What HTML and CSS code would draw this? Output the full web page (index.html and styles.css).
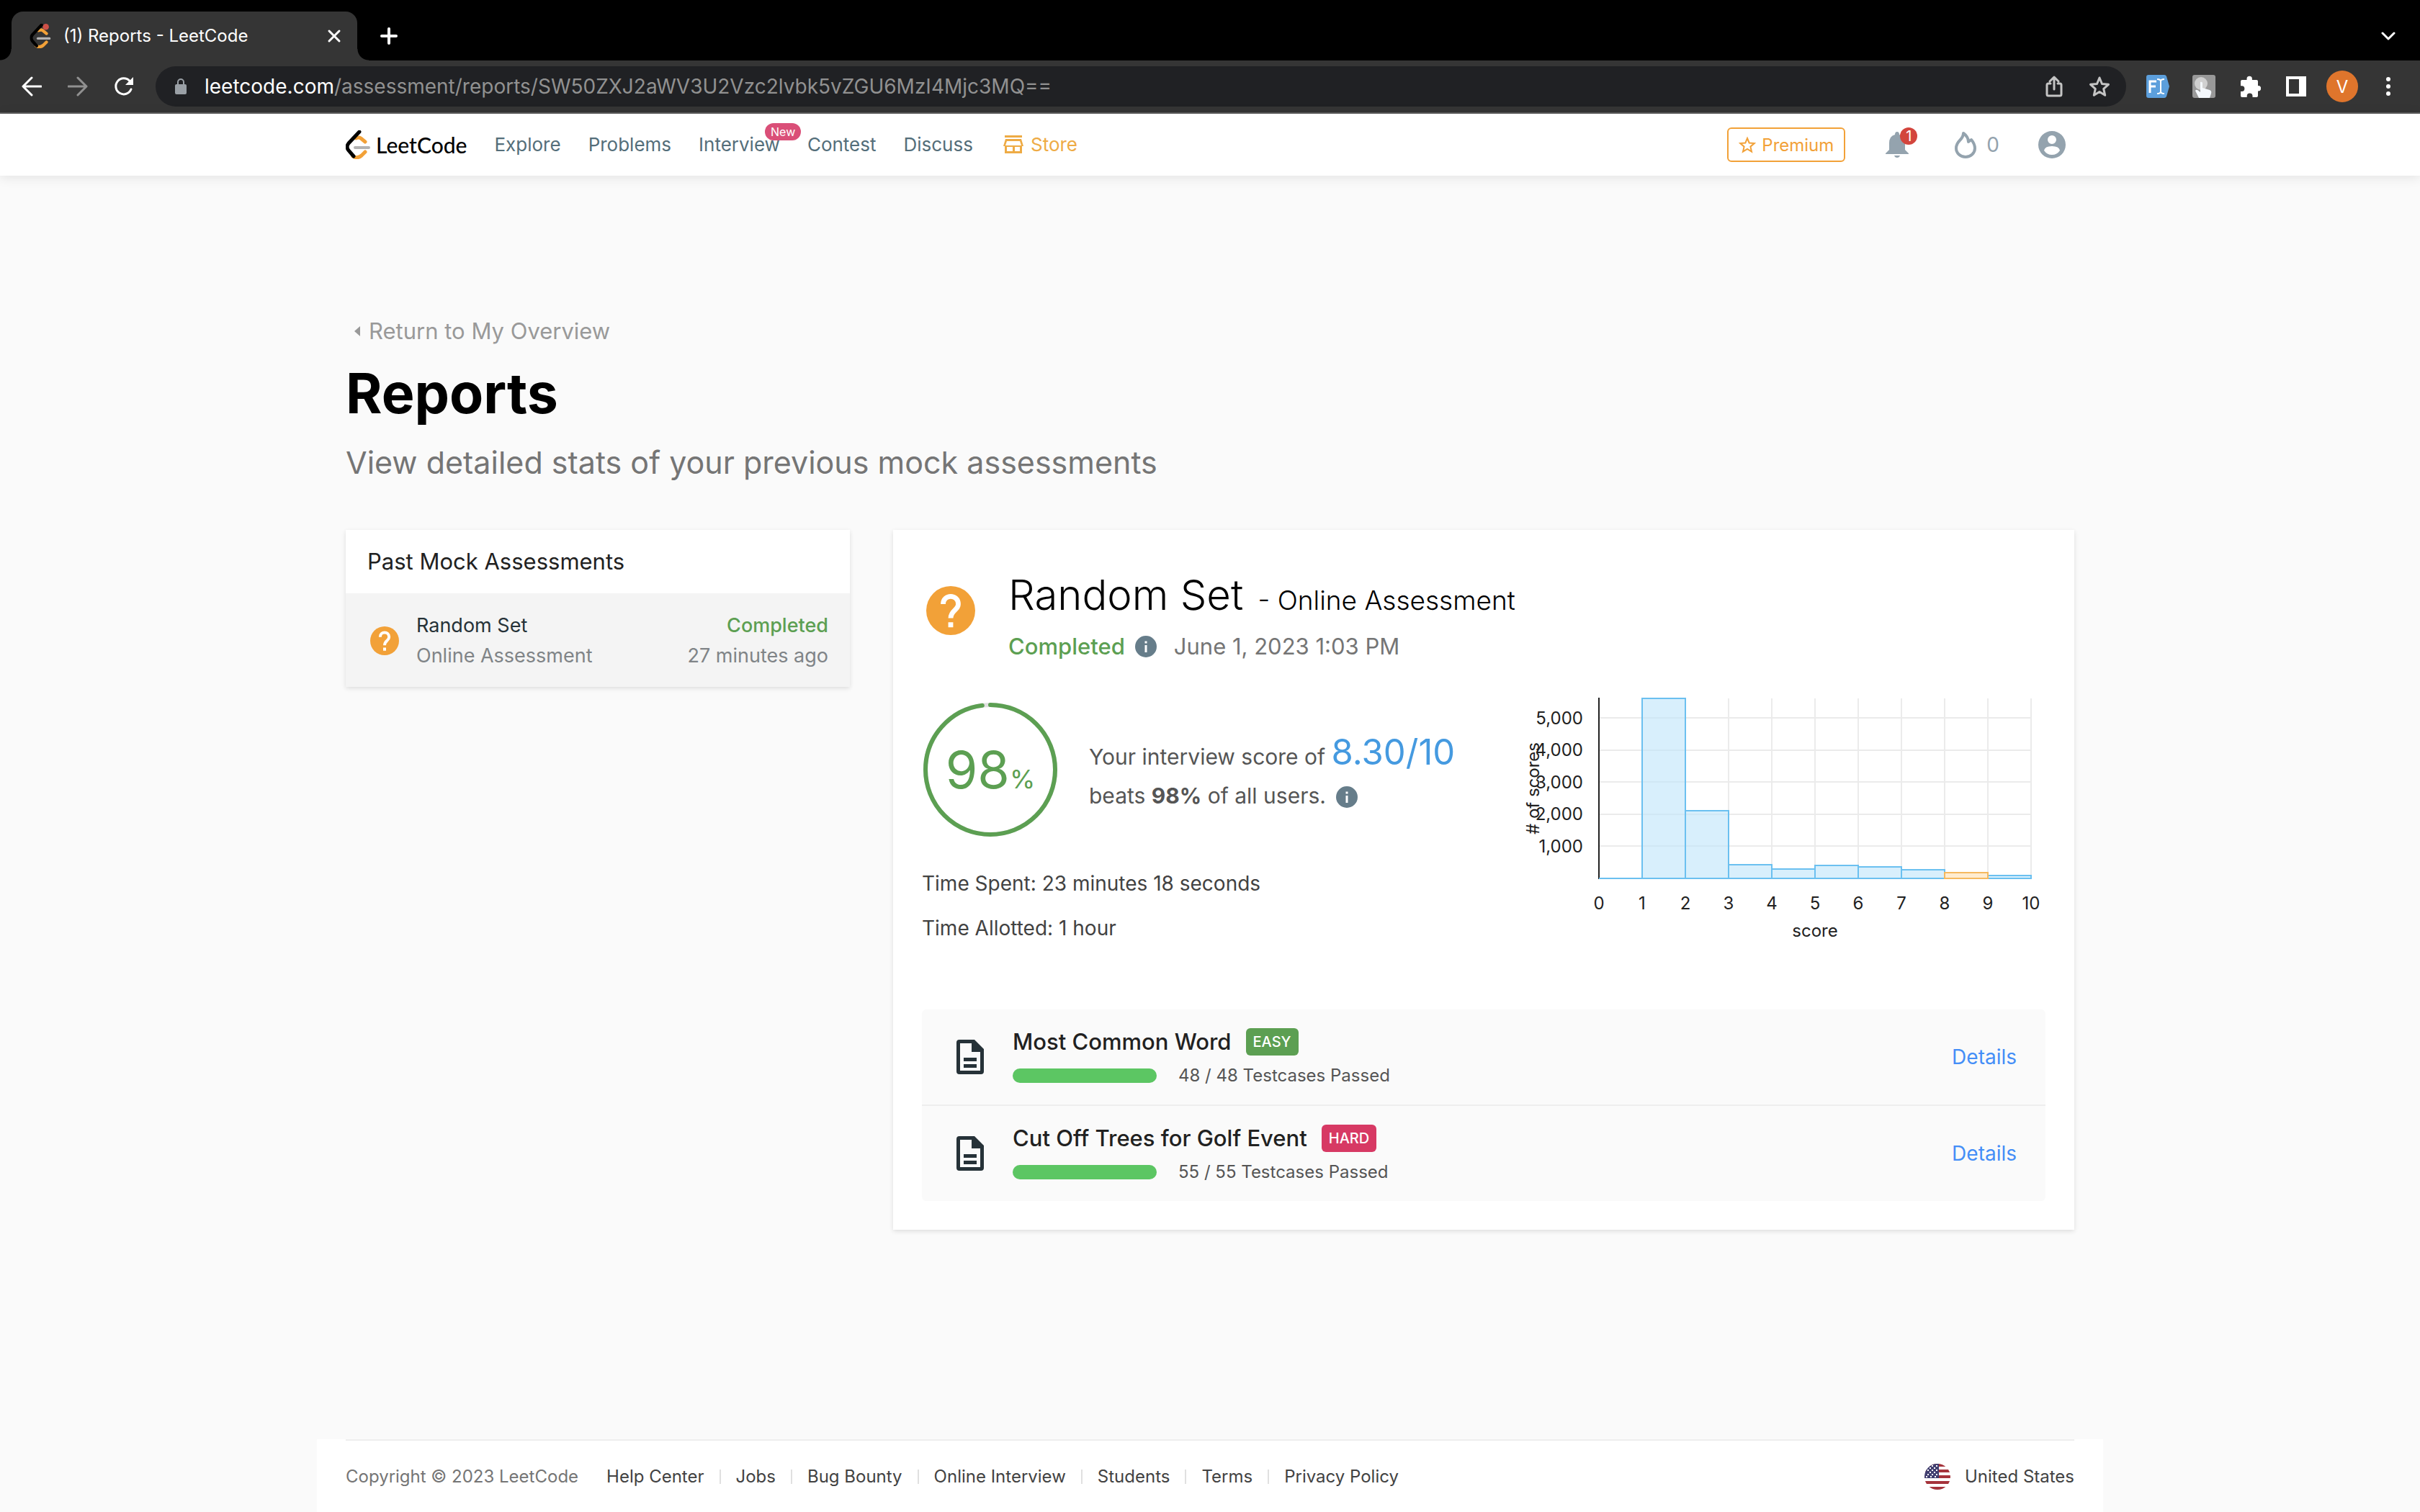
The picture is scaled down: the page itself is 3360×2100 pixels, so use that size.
FILE: index.html
```html
<!DOCTYPE html>
<html lang="en">
<head>
<meta charset="utf-8">
<title>(1) Reports - LeetCode</title>
<link rel="stylesheet" href="styles.css">
</head>
<body>
<svg class="defs" width="0" height="0" aria-hidden="true">
  <symbol id="mark" viewBox="0 0 34 40">
    <path class="mark-amber" d="M14 11q4-2 7 0l6 5M10 36q6 4 12-1l5-5"/>
    <path class="mark-black" d="M19 2 4 18q-4 5 0 10l7 8"/>
    <path class="mark-grey" d="M13 24h19"/>
  </symbol>
  <symbol id="question" viewBox="0 0 24 24">
    <path fill="#f2a138" d="M12 0a12 12 0 1 0 0 24 12 12 0 0 0 0-24z"/>
    <path fill="none" stroke="#fff" stroke-width="2.400" d="M8.300 8.800c0-5 7.400-5 7.400 0 0 3.100-3.700 3-3.700 6.900"/>
    <path fill="#fff" d="M10.800 17.700h2.400v2.500h-2.400z"/>
  </symbol>
  <symbol id="info" viewBox="0 0 30 30">
    <circle cx="15" cy="15" r="15" fill="#667d8a"/>
    <path fill="#fff" d="M13.500 7.500h3v3h-3zM13.500 13h3v10h-3z"/>
  </symbol>
  <symbol id="doc" viewBox="0 0 38 48">
    <path fill="#263238" fill-rule="evenodd" d="M4 0h21l13 13v31q0 4-4 4H4q-4 0-4-4V4q0-4 4-4zM5 5v38h28V17H21V5zM10 25h18v5H10zM10 34h18v5H10z"/>
  </symbol>
</svg>

<header class="browser">
  <div class="tabs">
    <div class="tab">
      <svg class="favicon" viewBox="0 0 34 40"><use href="#mark"/><circle cx="26" cy="5" r="5" fill="#cf5148"/></svg>
      <span class="tab-title">(1) Reports - LeetCode</span>
      <button class="plain" aria-label="Close tab"><svg width="20" height="20" viewBox="0 0 20 20"><path class="stroke" d="M3 3l14 14M17 3L3 17"/></svg></button>
    </div>
    <button class="plain new-tab" aria-label="New tab"><svg width="24" height="24" viewBox="0 0 24 24"><path class="stroke bold" d="M12 2v20M2 12h20"/></svg></button>
    <button class="plain tab-search" aria-label="Search tabs"><svg width="20" height="12" viewBox="0 0 20 12"><path class="stroke" d="M2 2l8 8 8-8"/></svg></button>
  </div>
  <div class="toolbar">
    <div class="history">
      <button class="plain" aria-label="Back"><svg width="28" height="28" viewBox="0 0 28 28"><path class="stroke" d="M27 14H3M14 2L2 14l12 12"/></svg></button>
      <button class="plain dim" aria-label="Forward"><svg width="28" height="28" viewBox="0 0 28 28"><path class="stroke" d="M1 14h24M14 2l12 12-12 12"/></svg></button>
      <button class="plain" aria-label="Reload"><svg width="28" height="28" viewBox="0 0 28 28"><path class="stroke" d="M24 18A11 11 0 1 1 22 6.500"/><path fill="#fff" d="M27 1v11H16z"/></svg></button>
    </div>
    <div class="address">
      <svg width="18" height="24" viewBox="0 0 18 24"><rect x="1" y="9" width="16" height="14" rx="2" fill="#9aa0a6"/><path fill="none" stroke="#9aa0a6" stroke-width="2" d="M5 10V6a4 4 0 0 1 8 0v4"/></svg>
      <span class="url"><span class="host">leetcode.com</span>/assessment/reports/SW50ZXJ2aWV3U2Vzc2lvbk5vZGU6MzI4Mjc3MQ==</span>
      <button class="plain share" aria-label="Share"><svg width="24" height="30" viewBox="0 0 24 30"><path class="stroke soft" d="M7 11H4q-2 0-2 2v13q0 2 2 2h16q2 0 2-2V13q0-2-2-2h-3M12 19V2M6 8l6-6 6 6"/></svg></button>
      <button class="plain" aria-label="Bookmark"><svg width="30" height="30" viewBox="0 0 30 30"><path class="stroke soft" d="M15 3l3.500 8.500 9 .8-6.800 6 2 9L15 22.500 7.300 27.300l2-9-6.800-6 9-.8z"/></svg></button>
    </div>
    <div class="extensions">
      <svg width="32" height="32" viewBox="0 0 32 32"><path fill="#5c9fdc" d="M3 0h22q2 0 3 2l4 14-4 14q-1 2-3 2H3q-3 0-3-3V3q0-3 3-3z"/><path fill="none" stroke="#fff" stroke-width="3" d="M5 25V9h9M5 16h8"/><path fill="none" stroke="#fff" stroke-width="2" d="M15 6q5 0 5 3v14q0 3-5 3M25 6q-5 0-5 3v14q0 3 5 3"/></svg>
      <svg width="32" height="32" viewBox="0 0 32 32"><rect width="32" height="32" rx="3" fill="#999"/><circle cx="12" cy="12" r="9" fill="#d0d0d0"/><path fill="#f4f8fc" d="M11 10q2-1 3 1v7l10 3q3 1 2 5l-2 6H9l-5-10q1-2 3-1l4 3z"/></svg>
      <svg width="30" height="30" viewBox="0 0 30 30"><path fill="#fff" d="M4 6h6.500V4.500a3.700 3.700 0 0 1 7.400 0V6H24q2 0 2 2v6h.500a3.700 3.700 0 0 1 0 7.400H26V28q0 2-2 2h-5.500v-1.500a3.900 3.900 0 0 0-7.800 0V30H4q-2 0-2-2v-6h1.500a3.900 3.900 0 0 0 0-7.800H2V8q0-2 2-2z"/></svg>
      <svg width="28" height="28" viewBox="0 0 28 28"><path fill="#fff" fill-rule="evenodd" d="M0 0h28v28H0zM4 4v20h14V4z"/></svg>
      <button class="avatar" aria-label="Profile">V</button>
      <button class="plain" aria-label="Menu"><svg width="8" height="28" viewBox="0 0 8 28"><g fill="#fff"><circle cx="4" cy="4" r="3"/><circle cx="4" cy="14" r="3"/><circle cx="4" cy="24" r="3"/></g></svg></button>
    </div>
  </div>
</header>

<div class="navbar">
  <div class="container nav-inner">
    <a class="logo" href="#"><svg width="34" height="40" viewBox="0 0 34 40"><use href="#mark"/></svg><span>LeetCode</span></a>
    <nav class="links">
      <a href="#">Explore</a>
      <a href="#">Problems</a>
      <a class="has-new" href="#">Interview<span class="new">New</span></a>
      <a href="#">Contest</a>
      <a href="#">Discuss</a>
      <a class="store" href="#"><svg width="28" height="26" viewBox="0 0 28 26"><path fill="#eeab45" fill-rule="evenodd" d="M2 0h24v3H2zM3 5h22l3 10h-2v10H2V15H0zM5 8l-2 6h22l-2-6zM5 16v6h8v-6zM16 16v6h7v-6z"/></svg>Store</a>
    </nav>
    <div class="account">
      <button class="premium"><svg width="24" height="24" viewBox="0 0 24 24"><path fill="none" stroke="#f2a138" stroke-width="2" d="M12 3l2.700 6.500 7 .600-5.300 4.600 1.600 6.900-6-3.700-6 3.700 1.600-6.900L2.300 10.100l7-.6z"/></svg>Premium</button>
      <button class="plain bell" aria-label="Notifications"><svg width="32" height="36" viewBox="0 0 32 36"><path fill="#94a3ae" d="M16 0q3 0 3 4 8 2 8 12v9l5 5v1H0v-1l5-5v-9Q5 6 13 4q0-4 3-4zM12 33h8q-1 3-4 3t-4-3z"/></svg><span class="count">1</span></button>
      <span class="streak"><svg width="30" height="38" viewBox="0 0 30 38"><path fill="none" stroke="#94a3ae" stroke-width="4" stroke-linejoin="round" d="M12 3q7 5 7 12l4-3q5 6 5 12a13 12 0 0 1-26 0Q2 18 7 13q5-5 5-10z"/></svg>0</span>
      <button class="plain" aria-label="Account"><svg width="38" height="38" viewBox="0 0 38 38"><path fill="#94a3ae" fill-rule="evenodd" d="M19 0a19 19 0 1 1 0 38 19 19 0 0 1 0-38zM19 6a6 6 0 1 0 0 12 6 6 0 0 0 0-12zM8 27q4 6 11 6t11-6q-1-6-11-6T8 27z"/></svg></button>
    </div>
  </div>
</div>

<main class="container">
  <a class="return" href="#"><svg width="8" height="14" viewBox="0 0 8 14"><path fill="#999" d="M8 0v14L0 7z"/></svg>Return to My Overview</a>
  <h1>Reports</h1>
  <p class="lead">View detailed stats of your previous mock assessments</p>

  <div class="columns">
    <aside class="card past">
      <h2>Past Mock Assessments</h2>
      <a class="past-item" href="#">
        <svg width="40" height="40"><use href="#question"/></svg>
        <span class="past-name"><b>Random Set</b>Online Assessment</span>
        <span class="past-state"><em>Completed</em>27 minutes ago</span>
      </a>
    </aside>

    <section class="card report">
      <div class="report-head">
        <svg width="68" height="68"><use href="#question"/></svg>
        <div>
          <h2>Random Set <small>- Online Assessment</small></h2>
          <p class="status"><em>Completed</em><svg width="30" height="30"><use href="#info"/></svg><time>June 1, 2023 1:03 PM</time></p>
        </div>
      </div>

      <div class="summary">
        <div class="result">
          <div class="score">
            <div class="ring">
              <svg viewBox="0 0 186 186"><circle cx="93" cy="93" r="90" fill="none" stroke="#e0e0e0" stroke-width="6"/><circle cx="93" cy="93" r="90" fill="none" stroke="#5c9f52" stroke-width="6" stroke-linecap="round" pathLength="100" stroke-dasharray="98 2" transform="rotate(-90 93 93)"/></svg>
              <p>98<small>%</small></p>
            </div>
            <p class="score-text">Your interview score of <span class="points">8.30/10</span><br>beats <strong>98%</strong> of all users. <svg width="30" height="30"><use href="#info"/></svg></p>
          </div>
          <p class="time">Time Spent: 23 minutes 18 seconds</p>
          <p class="time">Time Allotted: 1 hour</p>
        </div>

        <svg class="chart" width="740" height="360" viewBox="-20 0 740 360" role="img" aria-label="Score distribution">
          <path class="grid" d="M160 10v250M220 10v250M280 10v250M340 10v250M400 10v250M460 10v250M520 10v250M580 10v250M640 10v250M700 10v250M100 37h600M100 82h600M100 126h600M100 171h600M100 215h600"/>
          <path class="axis" d="M100 9v252"/>
          <g class="bars">
            <path d="M100 260h60"/>
            <rect x="160" y="10" width="60" height="250"/>
            <rect x="220" y="166" width="60" height="94"/>
            <rect x="280" y="241" width="60" height="19"/>
            <rect x="340" y="247" width="60" height="13"/>
            <rect x="400" y="242" width="60" height="18"/>
            <rect x="460" y="244" width="60" height="16"/>
            <rect x="520" y="248" width="60" height="12"/>
            <rect x="640" y="256" width="60" height="4"/>
            <rect class="mine" x="580" y="252" width="60" height="8"/>
          </g>
          <g class="ticks end">
            <text x="78" y="46">5,000</text><text x="78" y="90">4,000</text><text x="78" y="135">3,000</text><text x="78" y="179">2,000</text><text x="78" y="224">1,000</text>
          </g>
          <g class="ticks mid">
            <text x="100" y="303">0</text><text x="160" y="303">1</text><text x="220" y="303">2</text><text x="280" y="303">3</text><text x="340" y="303">4</text><text x="400" y="303">5</text><text x="460" y="303">6</text><text x="520" y="303">7</text><text x="580" y="303">8</text><text x="640" y="303">9</text><text x="700" y="303">10</text>
            <text x="400" y="341">score</text>
            <text transform="translate(17 135) rotate(-90)"># of scores</text>
          </g>
        </svg>
      </div>

      <ul class="questions">
        <li>
          <svg width="38" height="48"><use href="#doc"/></svg>
          <div class="question">
            <h3>Most Common Word <span class="level easy">EASY</span></h3>
            <p><progress value="48" max="48" aria-label="Testcases passed"></progress>48 / 48 Testcases Passed</p>
          </div>
          <a href="#">Details</a>
        </li>
        <li>
          <svg width="38" height="48"><use href="#doc"/></svg>
          <div class="question">
            <h3>Cut Off Trees for Golf Event <span class="level hard">HARD</span></h3>
            <p><progress value="55" max="55" aria-label="Testcases passed"></progress>55 / 55 Testcases Passed</p>
          </div>
          <a href="#">Details</a>
        </li>
      </ul>
    </section>
  </div>
</main>

<footer>
  <div class="footer-inner">
    <span class="copyright">Copyright © 2023 LeetCode</span>
    <nav class="footer-links"><a href="#">Help Center</a><a href="#">Jobs</a><a href="#">Bug Bounty</a><a href="#">Online Interview</a><a href="#">Students</a><a href="#">Terms</a><a href="#">Privacy Policy</a></nav>
    <a class="region" href="#">
      <svg width="36" height="36" viewBox="0 0 36 36"><clipPath id="disc"><circle cx="18" cy="18" r="18"/></clipPath><g clip-path="url(#disc)"><path fill="#fff" d="M0 0h36v36H0z"/><path fill="#a5333b" d="M0 0h36v4H0zM0 8h36v4H0zM0 16h36v4H0zM0 24h36v4H0zM0 32h36v4H0z"/><path fill="#413f70" d="M0 0h20v20H0z"/><path stroke="#fff" stroke-width="2" stroke-dasharray="2 4" d="M10 3h10M7 6h12M4 9h14M7 12h12M4 15h14M2 18h16"/></g></svg>
      United States
    </a>
  </div>
</footer>
</body>
</html>
```

FILE: styles.css
```css
* { box-sizing: border-box; }

body {
  margin: 0;
  min-height: 100vh;
  display: flex;
  flex-direction: column;
  background: #fafafa;
  color: #212121;
  font: 28px/40px Inter, "Noto Sans", sans-serif;
}

h1, h2, h3, p, ul { margin: 0; padding: 0; font-weight: 400; }
a { color: inherit; text-decoration: none; }
em { font-style: normal; }
svg { display: block; flex: none; }
.defs { position: absolute; }

.plain { display: flex; padding: 0; border: 0; background: none; color: inherit; font: inherit; }
.container { width: 100%; max-width: 2400px; margin: 0 auto; }

.mark-amber, .mark-black, .mark-grey { fill: none; stroke-width: 4; stroke-linecap: round; }
.mark-amber { stroke: #f2a138; stroke-width: 5; }
.mark-black { stroke: #000; stroke-width: 5; }
.mark-grey { stroke: #b3b3b3; }

/* Browser window */
.browser { background: #353535; border-bottom: 2px solid #5c5c5c; }
.tabs { display: flex; align-items: center; height: 84px; padding: 16px 34px 0 16px; background: #000; }
.tab {
  position: relative;
  display: flex;
  align-items: center;
  width: 480px;
  height: 68px;
  padding: 0 22px 0 24px;
  border-radius: 16px 16px 0 0;
  background: #353535;
}
.tab::before, .tab::after {
  content: "";
  position: absolute;
  bottom: 0;
  width: 16px;
  height: 16px;
}
.tab::before { left: -16px; background: radial-gradient(circle at 0 0, #000 15px, #353535 16px); }
.tab::after { right: -16px; background: radial-gradient(circle at 100% 0, #000 15px, #353535 16px); }
.favicon { width: 32px; height: 34px; }
.tab-title { flex: 1; padding-left: 16px; color: #fff; font-size: 24px; }
.new-tab { margin-left: 32px; }
.tab-search { margin-left: auto; }
.stroke { fill: none; stroke: #fff; stroke-width: 3; stroke-linecap: round; stroke-linejoin: round; }
.stroke.bold { stroke-width: 4; }
.stroke.soft { stroke: #c4c4c4; }
.dim { opacity: .45; }
.toolbar { display: flex; align-items: center; height: 72px; padding: 0 12px 0 30px; }
.history { display: flex; gap: 36px; margin-right: 30px; }
.address {
  flex: 1;
  display: flex;
  align-items: center;
  height: 56px;
  padding: 0 22px 0 26px;
  border-radius: 28px;
  background: #202124;
}
.url { flex: 1; padding-left: 24px; color: #919191; }
.host { color: #fff; }
.share { margin-right: 36px; }
.extensions { display: grid; grid-template-columns: repeat(6, 64px); align-items: center; justify-items: center; margin-left: 12px; }
.avatar { width: 44px; height: 44px; padding: 0; border: 0; border-radius: 50%; background: #df752c; color: #fff; font: 24px Inter, sans-serif; }

/* Site navigation */
.navbar { background: #fff; box-shadow: 0 2px 16px rgba(0, 0, 0, .1); }
.nav-inner { display: flex; align-items: center; height: 86px; color: #546e7a; }
.logo { display: flex; align-items: center; gap: 8px; color: #000; font: 500 30px/40px Lato, sans-serif; }
.links { display: flex; gap: 38px; margin-left: 38px; font-size: 26px; }
.has-new { position: relative; }
.new {
  position: absolute;
  top: -10px;
  left: 92px;
  padding: 0 8px;
  border-radius: 12px;
  background: #da4f78;
  color: #fff;
  font-size: 16px;
  line-height: 24px;
}
.store { display: flex; align-items: center; gap: 10px; margin-left: 4px; color: #eeab45; }
.account { display: flex; align-items: center; margin-left: auto; margin-right: 12px; color: #94a3ae; }
.premium {
  display: flex;
  align-items: center;
  gap: 8px;
  height: 48px;
  padding: 0 14px;
  border: 2px solid #f2a138;
  border-radius: 6px;
  background: #fff;
  color: #f2a138;
  font: 24px Inter, sans-serif;
}
.bell { position: relative; margin: 0 64px 0 56px; }
.count {
  position: absolute;
  top: -6px;
  left: 20px;
  width: 24px;
  border-radius: 12px;
  background: #d3453d;
  color: #fff;
  font-size: 20px;
  line-height: 24px;
  text-align: center;
}
.streak { display: flex; align-items: center; gap: 14px; margin-right: 54px; }

/* Page heading */
main { flex: 1; padding: 196px 0 120px; }
.return { display: flex; align-items: center; gap: 12px; padding-left: 12px; color: #999; font-size: 31px; }
h1 { margin-top: 16px; color: #000; font-size: 77px; font-weight: 700; line-height: 100px; }
.lead { margin-top: 14px; color: #757575; font-size: 43px; line-height: 64px; }

/* Cards */
.columns { display: grid; grid-template-columns: 700fr 1640fr; gap: 60px; align-items: start; margin-top: 62px; }
.card { background: #fff; box-shadow: 0 2px 6px rgba(0, 0, 0, .12); }
.past h2 { padding: 24px 30px; font-size: 31px; }
.past-item {
  display: grid;
  grid-template-columns: 40px 1fr auto;
  align-items: center;
  gap: 24px;
  padding: 24px 30px 22px 34px;
  background: #f4f4f4;
  color: #808487;
  font-size: 27px;
  line-height: 42px;
}
.past-name, .past-state { display: grid; }
.past-state { text-align: right; }
.past-name b { color: #263238; font-weight: 400; }
.past-item em, .status em { color: #5c9f52; font-weight: 500; }

.report { padding: 50px 40px 40px; }
.report-head { display: flex; align-items: flex-start; gap: 46px; padding-left: 6px; }
.report-head > svg { margin-top: 28px; }
.report-head h2 { color: #000; font-size: 58px; font-weight: 300; line-height: 80px; }
.report-head small { padding-left: 4px; font-size: 37px; }
.status { display: flex; align-items: center; gap: 14px; padding-bottom: 20px; color: #757575; font-size: 31px; line-height: 48px; }
.status time { padding-left: 10px; }

.summary { display: flex; justify-content: space-between; margin-top: 18px; }
.score { display: flex; align-items: center; gap: 44px; padding-left: 2px; margin: 16px 0 34px; }
.ring { display: grid; width: 186px; color: #5c9f52; font-size: 72px; text-align: center; }
.ring > * { grid-area: 1 / 1; align-self: center; }
.ring p { padding-top: 12px; }
.ring small { font-size: 36px; }
.score-text { padding-top: 12px; color: #555; font-size: 30px; line-height: 54px; }
.score-text svg { display: inline-block; margin-left: 6px; vertical-align: -6px; }
.points { color: #459ae0; font-size: 49px; }
.time { color: #424242; line-height: 62px; }

.grid { stroke: rgba(0, 0, 0, .08); stroke-width: 2; }
.axis { stroke: #222; stroke-width: 2; }
.bars { fill: rgba(190, 228, 250, .6); stroke: #6bc0f0; stroke-width: 2; }
.bars .mine { fill: #ffeccf; stroke: #f5b95f; }
.ticks { fill: #212121; font-size: 24px; }
.end { text-anchor: end; }
.mid { text-anchor: middle; }

.questions { margin-top: 82px; border-radius: 6px; background: #fafafa; list-style: none; }
.questions li { display: flex; align-items: center; gap: 40px; height: 132px; padding: 0 40px 0 48px; }
.questions li + li { height: 134px; border-top: 2px solid #eee; }
.question { flex: 1; padding-top: 6px; }
.question h3 { display: flex; align-items: center; gap: 20px; font-size: 31px; font-weight: 500; line-height: 38px; }
.level { padding: 0 10px; border-radius: 6px; color: #fff; font-size: 20px; }
.easy { background: #5c9f52; }
.hard { background: #d73964; }
.question p { display: flex; align-items: center; gap: 30px; margin-top: 8px; color: #555; font-size: 24px; }
progress { appearance: none; width: 200px; height: 20px; border: 0; }
progress::-webkit-progress-bar { border-radius: 10px; background: #eee; }
progress::-webkit-progress-value { border-radius: 10px; background: #5cc663; }
.questions a { color: #448ef7; }

/* Footer */
footer { width: 100%; max-width: 2480px; margin: 0 auto; padding: 0 40px; background: #fff; }
.footer-inner { display: flex; align-items: center; min-height: 101px; border-top: 2px solid #eee; color: #424242; font-size: 24px; }
.copyright { color: #757575; }
.footer-links { display: flex; align-items: center; margin-left: 18px; }
.footer-links a { padding: 0 21px; border-left: 2px solid #e0e0e0; line-height: 20px; }
.footer-links a:first-child { border-left: 0; }
.region { display: flex; align-items: center; gap: 20px; margin-left: auto; }
```
